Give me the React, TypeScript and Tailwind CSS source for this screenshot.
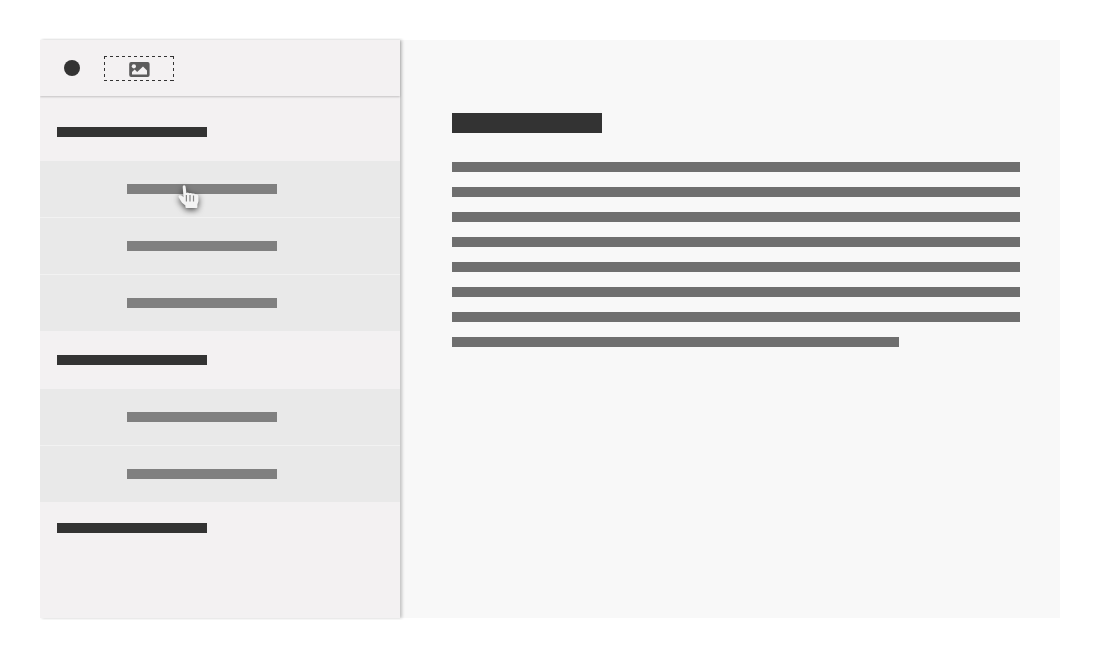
type Section = { id: string; items: string[]; heading: string };

const sections: Section[] = [
  { id: "first", items: ["one", "two", "three"], heading: "h-[65px] pt-[31px]" },
  { id: "second", items: ["four", "five"], heading: "h-[58px] pt-6" },
  { id: "third", items: [], heading: "pt-[21px]" },
];

const lines = ["w-full", "w-full", "w-full", "w-full", "w-full", "w-full", "w-full", "w-[447px]"];

function LogoPlaceholder() {
  return (
    <svg viewBox="0 0 70 25" className="h-[25px] w-[70px]" aria-hidden="true">
      <path d="M0 .5H70M0 24.5H70M.5 0V25M69.5 0V25" fill="none" stroke="#333" strokeWidth="1" strokeDasharray="3 3" />
      <g transform="translate(25 6)">
        <rect x="0.2" y="0" width="20.4" height="15" rx="2" fill="#5c5c5c" />
        <circle cx="4.9" cy="4.3" r="2.1" fill="#f3f1f2" />
        <path d="M3 12.6V10L5.7 7.6 8.2 9.9 14 4.6 18 8.6V12.6Z" fill="#f3f1f2" />
      </g>
    </svg>
  );
}

function HandCursor() {
  return (
    <svg
      viewBox="0 0 22 24"
      aria-hidden="true"
      className="absolute top-6 left-[138px] h-6 w-[22px] drop-shadow-[0_2px_3px_rgba(0,0,0,0.7)]"
    >
      <path
        d="M4.7 1.8Q4.7.3 6.1.3T7.6 1.8L8.4 7.9Q9.9 7.1 11.2 8.2 12.9 7.4 14.4 8.6 16.2 8 17.4 9.2 20.1 8.8 20.4 11L20.5 16 19.4 19.4V22.2Q19.4 22.9 18.6 22.9H8.4Q7.6 22.9 7.4 22.2V20.4L4 17.7.6 12.2Q.1 10.7 1.5 10.2 2.9 9.9 4.2 11L5.5 12.2Z"
        fill="#f3f3f3"
      />
      <path d="M8.4 10V16.5M12 10V16.5M15.5 10.5V16.5" fill="none" stroke="#858585" strokeWidth="1.2" />
    </svg>
  );
}

function Sidebar() {
  return (
    <aside className="relative z-10 w-[360px] shrink-0 bg-[#f3f1f2] shadow-[2px_0_3px_rgba(0,0,0,0.22)] [clip-path:inset(-2px_-8px_-2px_0)]">
      <header className="flex h-14 items-center gap-6 px-6 shadow-[0_1px_2px_rgba(0,0,0,0.2)]">
        <button type="button" aria-label="Menu" className="size-4 rounded-full bg-[#333]" />
        <a href="#home" aria-label="Home">
          <LogoPlaceholder />
        </a>
      </header>
      <nav aria-label="Sections">
        {sections.map((section, s) => (
          <section key={section.id}>
            <div className={`px-[17px] ${section.heading}`}>
              <div className="h-2.5 w-[150px] bg-[#333]" />
            </div>
            <ul className="flex flex-col gap-px bg-[#f2f2f2]">
              {section.items.map((item, i) => (
                <li key={item}>
                  <a href={`#${item}`} aria-label={item} className="relative flex h-14 items-center bg-[#e9e9e9] px-[87px]">
                    <span className="h-2.5 w-[150px] bg-[#808080]" />
                    {s === 0 && i === 0 && <HandCursor />}
                  </a>
                </li>
              ))}
            </ul>
          </section>
        ))}
      </nav>
    </aside>
  );
}

export default function App() {
  return (
    <div className="flex min-h-screen bg-white p-10">
      <Sidebar />
      <main className="min-w-0 flex-1 bg-[#f8f8f8] pt-[73px] pr-10 pl-[52px]">
        <div className="h-5 w-[150px] bg-[#333]" />
        <div className="mt-[29px] flex flex-col gap-[15px]">
          {lines.map((width, i) => (
            <div key={i} className={`h-2.5 max-w-full bg-[#6f6f6f] ${width}`} />
          ))}
        </div>
      </main>
    </div>
  );
}
